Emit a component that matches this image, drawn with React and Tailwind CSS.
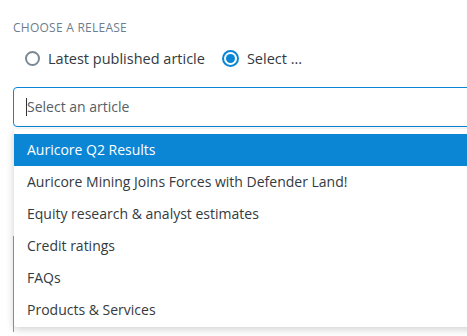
import React, { useState } from 'react';

const articles = [
  'Auricore Q2 Results',
  'Auricore Mining Joins Forces with Defender Land!',
  'Equity research & analyst estimates',
  'Credit ratings',
  'FAQs',
  'Products & Services',
];

const Radio = ({ checked, label, onClick }) => (
  <button onClick={onClick} className="flex items-center gap-[8px] text-[14.5px] text-[#333a40]">
    {checked ? (
      <span className="w-[17px] h-[17px] rounded-full border-2 border-[#0a86d5] flex items-center justify-center">
        <span className="w-[9px] h-[9px] rounded-full bg-[#0a86d5]" />
      </span>
    ) : (
      <span className="w-[15px] h-[15px] rounded-full border-2 border-[#7b8896]" />
    )}
    {label}
  </button>
);

const App = () => {
  const [mode, setMode] = useState('select');
  const [active, setActive] = useState(0);

  return (
    <div className="h-screen bg-white pl-[13px] pt-[20px] font-['Open_Sans',sans-serif] overflow-hidden">
      <h3 className="text-[12px] tracking-[0.25px] uppercase text-[#6e7d8c] leading-4">Choose a release</h3>

      <div className="flex items-center gap-[17px] mt-[12px] pl-[12px]">
        <Radio checked={mode === 'latest'} label="Latest published article" onClick={() => setMode('latest')} />
        <Radio checked={mode === 'select'} label="Select ..." onClick={() => setMode('select')} />
      </div>

      <div className="relative mt-[17px] w-[470px]">
        <input
          placeholder="Select an article"
          className="w-full h-[40px] border border-[#0a86d5] rounded-[4px] px-[13px] text-[14px] text-[#333a40] placeholder:text-[#555e66] outline-none"
        />
        {/* caret */}
        <span className="absolute left-[13px] top-[11px] w-px h-[18px] bg-[#333]" />

        {/* next field behind the menu */}
        <div className="h-[96px] border-l border-[#999] mt-[109px]" />

        <ul className="absolute left-[1px] top-[42px] w-full bg-white shadow-[0_2px_8px_rgba(0,0,0,0.2)] rounded-b-[3px] pt-[5px] pb-[1px]">
          {articles.map((a, i) => (
            <li
              key={a}
              onMouseEnter={() => setActive(i)}
              className={`h-[32px] flex items-center px-[13px] text-[14px] cursor-pointer ${
                i === active ? 'bg-[#0a86d5] text-white' : 'text-[#333a40]'
              }`}
            >
              {a}
            </li>
          ))}
        </ul>
      </div>
    </div>
  );
};

export default App;
